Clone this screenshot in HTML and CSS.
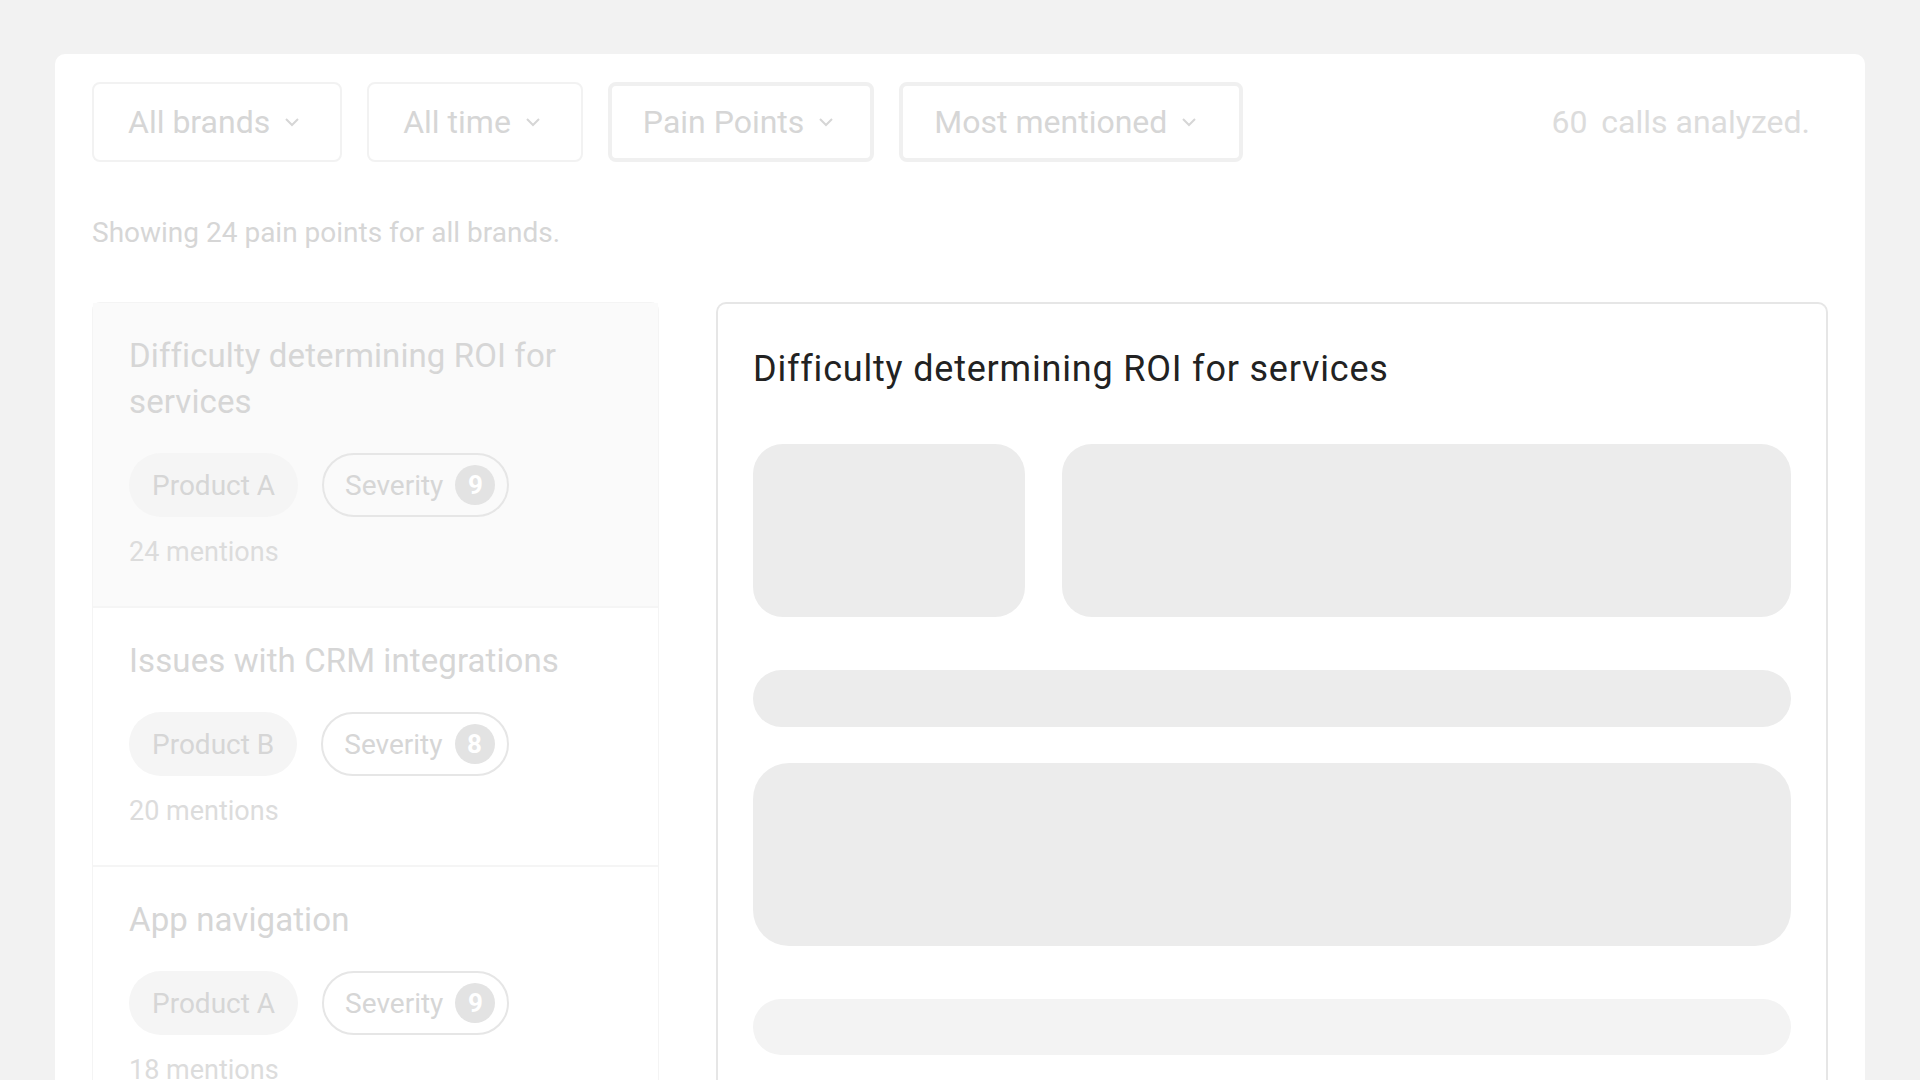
FILE: index.html
```html
<!DOCTYPE html>
<html lang="en">
<head>
<meta charset="utf-8">
<title>Pain Points</title>
<link rel="stylesheet" href="styles.css">
</head>
<body>
<main class="card">
  <div class="toolbar">
    <button class="filter">All brands <svg class="chev" viewBox="0 0 16 10"><path d="M2 2l6 6 6-6"/></svg></button>
    <button class="filter">All time <svg class="chev" viewBox="0 0 16 10"><path d="M2 2l6 6 6-6"/></svg></button>
    <button class="filter filter-strong">Pain Points <svg class="chev" viewBox="0 0 16 10"><path d="M2 2l6 6 6-6"/></svg></button>
    <button class="filter filter-strong filter-wide">Most mentioned <svg class="chev" viewBox="0 0 16 10"><path d="M2 2l6 6 6-6"/></svg></button>
    <div class="calls"><span class="calls-num">60</span> calls analyzed.</div>
  </div>

  <p class="summary">Showing 24 pain points for all brands.</p>

  <div class="content">
    <ul class="list">
      <li class="item item-active">
        <h3 class="item-title">Difficulty determining ROI for services</h3>
        <div class="chips">
          <span class="chip chip-product">Product A</span>
          <span class="chip chip-severity">Severity <span class="badge">9</span></span>
        </div>
        <div class="mentions">24 mentions</div>
      </li>
      <li class="item">
        <h3 class="item-title">Issues with CRM integrations</h3>
        <div class="chips">
          <span class="chip chip-product">Product B</span>
          <span class="chip chip-severity">Severity <span class="badge">8</span></span>
        </div>
        <div class="mentions">20 mentions</div>
      </li>
      <li class="item">
        <h3 class="item-title">App navigation</h3>
        <div class="chips">
          <span class="chip chip-product">Product A</span>
          <span class="chip chip-severity">Severity <span class="badge">9</span></span>
        </div>
        <div class="mentions">18 mentions</div>
      </li>
    </ul>

    <section class="detail">
      <h2 class="detail-title">Difficulty determining ROI for services</h2>
      <div class="sk-row">
        <div class="sk sk-small"></div>
        <div class="sk sk-wide"></div>
      </div>
      <div class="sk sk-bar"></div>
      <div class="sk sk-block"></div>
      <div class="sk sk-bar sk-light"></div>
    </section>
  </div>
</main>
</body>
</html>
```

FILE: styles.css
```css
* { box-sizing: border-box; }

html, body {
  margin: 0;
  height: 100%;
  overflow: hidden;
}

body {
  background: #f2f2f2;
  padding: 54px 55px 0 55px;
  font-family: "Roboto", "Noto Sans", sans-serif;
  color: #d6d6d6;
}

.card {
  background: #ffffff;
  border-radius: 10px 10px 0 0;
  padding: 28px 37px 0 37px;
  min-height: 1100px;
}

.toolbar {
  display: flex;
  align-items: center;
  gap: 25px;
}

.filter {
  height: 80px;
  display: flex;
  align-items: center;
  gap: 14px;
  padding: 0 40px 0 34px;
  background: #fff;
  border: 2px solid #f2f2f2;
  border-radius: 8px;
  font-family: inherit;
  font-size: 32px;
  color: #d6d6d6;
}

.filter-strong {
  border: 4px solid #f0f0f0;
  padding: 0 36px 0 31px;
}

.filter-wide {
  padding-right: 42px;
}

.chev {
  width: 16px;
  height: 10px;
  fill: none;
  stroke: #d6d6d6;
  stroke-width: 2;
}

.calls {
  margin-left: auto;
  margin-right: 18px;
  font-size: 32px;
  color: #dcdcdc;
}

.calls-num {
  margin-right: 6px;
}

.summary {
  margin: 51px 0 0 0;
  font-size: 28px;
  line-height: 40px;
  color: #d6d6d6;
}

.content {
  display: grid;
  grid-template-columns: 567px 1fr;
  gap: 57px;
  margin-top: 49px;
  align-items: start;
}

.list {
  list-style: none;
  margin: 0;
  padding: 0;
  border: 1px solid #f4f4f4;
  border-radius: 8px 8px 0 0;
}

.item {
  padding: 30px 36px 36px 36px;
  border-bottom: 2px solid #f5f5f5;
}

.item-active {
  background: #fafafa;
}

.item-title {
  margin: 0;
  font-size: 33px;
  letter-spacing: 0.1px;
  font-weight: 400;
  line-height: 46px;
  color: #d6d6d6;
}

.chips {
  display: flex;
  gap: 24px;
  margin-top: 28px;
}

.chip {
  height: 64px;
  display: inline-flex;
  align-items: center;
  border-radius: 32px;
  font-size: 28px;
  color: #d6d6d6;
}

.chip-product {
  background: #f5f5f5;
  padding: 0 23px;
}

.chip-severity {
  border: 2px solid #e6e6e6;
  padding: 0 12px 0 21px;
  gap: 12px;
}

.badge {
  width: 40px;
  height: 40px;
  border-radius: 50%;
  background: #e3e3e3;
  color: #fff;
  font-weight: 700;
  font-size: 26px;
  display: inline-flex;
  align-items: center;
  justify-content: center;
}

.mentions {
  margin-top: 17px;
  font-size: 27px;
  line-height: 36px;
  color: #dcdcdc;
}

.detail {
  border: 2px solid #e6e6e6;
  border-bottom: none;
  border-radius: 10px 10px 0 0;
  padding: 41px 35px 60px 35px;
  min-height: 800px;
}

.detail-title {
  margin: 0;
  font-size: 36px;
  letter-spacing: 0.8px;
  font-weight: 400;
  line-height: 48px;
  color: #222222;
}

.sk {
  background: #ececec;
}

.sk-row {
  display: flex;
  gap: 37px;
  margin-top: 51px;
}

.sk-small {
  width: 272px;
  height: 173px;
  border-radius: 30px;
}

.sk-wide {
  flex: 1;
  height: 173px;
  border-radius: 30px;
}

.sk-bar {
  height: 57px;
  border-radius: 29px;
  margin-top: 53px;
}

.sk-block {
  height: 183px;
  border-radius: 36px;
  margin-top: 36px;
}

.sk-light {
  background: #f3f3f3;
  height: 56px;
}
```
